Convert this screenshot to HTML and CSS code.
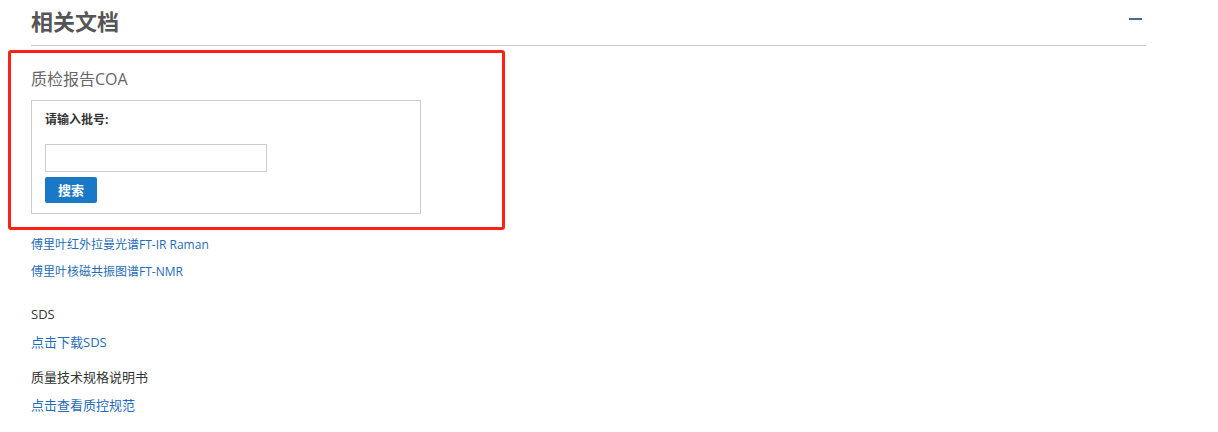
FILE: index.html
```html
<!DOCTYPE html>
<html lang="zh-CN">
<head>
<meta charset="utf-8">
<title>相关文档</title>
<link rel="stylesheet" href="styles.css">
</head>
<body>
<div class="page">
  <div class="panel-head">
    <h2 class="panel-title">相关文档</h2>
    <span class="collapse" aria-label="收起"></span>
  </div>
  <div class="panel-body">
    <section class="coa">
      <h3 class="coa-title">质检报告COA</h3>
      <div class="coa-box">
        <label class="coa-label" for="lot">请输入批号:</label>
        <input class="coa-input" id="lot" type="text">
        <button class="coa-btn" type="button">搜索</button>
      </div>
    </section>
    <div class="spec-links">
      <a class="link small" href="#">傅里叶红外拉曼光谱FT-IR Raman</a>
      <a class="link small" href="#">傅里叶核磁共振图谱FT-NMR</a>
    </div>
    <div class="doc-group sds">
      <div class="doc-title">SDS</div>
      <a class="link" href="#">点击下载SDS</a>
    </div>
    <div class="doc-group">
      <div class="doc-title">质量技术规格说明书</div>
      <a class="link" href="#">点击查看质控规范</a>
    </div>
  </div>
</div>
</body>
</html>
```

FILE: styles.css
```css
* { box-sizing: border-box; }
html, body { margin: 0; padding: 0; background: #fff; }
body {
  font-family: "Open Sans", "Noto Sans CJK SC", sans-serif;
  color: #333;
}
.page {
  width: 1146px;
  padding-left: 31px;
}
.panel-head {
  display: flex;
  justify-content: space-between;
  align-items: center;
  height: 46px;
  border-bottom: 1px solid #cccccc;
  padding-bottom: 4px;
}
.panel-title {
  margin: 0;
  font-size: 22px;
  font-weight: bold;
  color: #555;
  line-height: 42px;
}
.collapse {
  display: block;
  width: 13px;
  height: 2px;
  background: #4a6d8c;
  margin-right: 4px;
  margin-top: -3px;
}
.panel-body { display: flex; flex-direction: column; align-items: flex-start; }
.coa {
  margin-left: -23px;
  margin-top: 4px;
  width: 497px;
  border: 3px solid #fe2114;
  border-radius: 3px;
  padding: 14px 20px 13px 20px;
}
.coa-title {
  margin: 0;
  font-size: 16px;
  font-weight: normal;
  color: #666;
  line-height: 24px;
}
.coa-box {
  margin-top: 9px;
  width: 390px;
  height: 114px;
  border: 1px solid #cccccc;
  padding: 10px 13px;
  display: flex;
  flex-direction: column;
  align-items: flex-start;
}
.coa-label {
  font-size: 12px;
  font-weight: bold;
  color: #333;
  line-height: 18px;
}
.coa-input {
  margin-top: 15px;
  width: 222px;
  height: 28px;
  border: 1px solid #cccccc;
  padding: 0 6px;
  font: inherit;
}
.coa-btn {
  margin-top: 5px;
  width: 52px;
  height: 27px;
  border: 0;
  border-radius: 2px;
  background: #1a79c6;
  color: #fff;
  font-family: "Noto Sans CJK SC", sans-serif;
  font-size: 13px;
  font-weight: bold;
  padding: 0;
}
.link {
  color: #1f6cb8;
  text-decoration: none;
  font-size: 13px;
  line-height: 20px;
}
.link.small { font-size: 12px; }
.spec-links {
  display: flex;
  flex-direction: column;
  gap: 7px;
  margin-top: 5px;
}
.doc-group {
  display: flex;
  flex-direction: column;
  align-items: flex-start;
  gap: 8px;
}
.doc-group.sds { margin-top: 22px; }
.doc-group + .doc-group { margin-top: 15px; }
.doc-title {
  font-size: 13px;
  color: #333;
  line-height: 20px;
}
```
